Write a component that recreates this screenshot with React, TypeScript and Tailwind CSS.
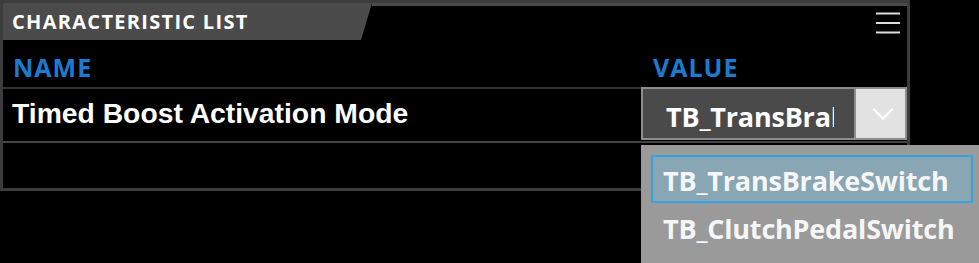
const UI_FONT = { fontFamily: '"Open Sans", "DejaVu Sans", sans-serif' }
const ROW_FONT = { fontFamily: '"Liberation Sans", Arial, sans-serif' }

const OPTIONS = ["TB_TransBrakeSwitch", "TB_ClutchPedalSwitch"]

function MenuIcon() {
  return (
    <svg width="24" height="22" viewBox="0 0 24 22" className="block">
      <rect x="0" y="0.5" width="24" height="2" fill="#dcdcdc" />
      <rect x="0" y="10" width="24" height="2" fill="#dcdcdc" />
      <rect x="0" y="19.5" width="24" height="2" fill="#dcdcdc" />
    </svg>
  )
}

function ValueSelect({ value }: { value: string }) {
  return (
    <div className="-mt-[2px] flex h-[53px] border-2 border-[#8e8e8e] bg-[#4a4a4a]">
      <div className="flex w-[191px] items-center overflow-hidden whitespace-nowrap pl-[23px] pt-[5px]">
        <span className="text-[27px] font-bold leading-none tracking-[-0.2px] text-white" style={UI_FONT}>
          {value}
        </span>
      </div>
      <div className="flex-1" />
      <div className="flex w-[51px] items-center justify-center border-l-2 border-[#8e8e8e] bg-[#e2e2e2] pl-[4px]">
        <svg width="22" height="14" viewBox="0 0 22 14">
          <polyline points="1.5,2 11,11.5 20.5,2" fill="none" stroke="#ffffff" strokeWidth="2.4" />
        </svg>
      </div>
    </div>
  )
}

function OptionList({ options, selected }: { options: string[]; selected: number }) {
  return (
    <div className="absolute left-[641px] top-[145px] flex h-[140px] w-[360px] flex-col bg-[#9a9a9a] pl-[10px] pt-[10px]">
      {options.map((opt, i) => (
        <div
          key={opt}
          className={`flex h-[48px] w-[322px] items-center border-2 pl-[10px] pt-[3px] ${
            i === selected ? "border-[#37a2e2] bg-[#88a6b4]" : "border-transparent"
          }`}
        >
          <span
            className="whitespace-nowrap text-[27px] font-bold leading-none tracking-[-0.2px] text-[#f6f6f6]"
            style={UI_FONT}
          >
            {opt}
          </span>
        </div>
      ))}
    </div>
  )
}

export default function App() {
  return (
    <div className="relative h-[263px] w-[979px] overflow-hidden bg-black">
      <section className="flex h-[191px] w-[910px] flex-col border-[3px] border-[#3c3c3c]">
        <header className="flex h-[37px] shrink-0">
          <div className="flex w-[369px] items-center bg-[#4b4b4b] pl-[9px] pt-[1px] [clip-path:polygon(0_0,100%_0,calc(100%-11px)_100%,0_100%)]">
            <span className="text-[20px] font-bold leading-none tracking-[1.3px] text-white" style={UI_FONT}>
              CHARACTERISTIC LIST
            </span>
          </div>
          <div className="flex flex-1 justify-end border-t-[3px] border-[#4b4b4b] pr-[7px] pt-[6px]">
            <MenuIcon />
          </div>
        </header>

        <div className="flex h-[47px] shrink-0 items-end pb-[4px]">
          <div className="flex-1 pl-[10px]">
            <span className="text-[25px] font-bold leading-none tracking-[1px] text-[#1b7bd0]" style={UI_FONT}>
              NAME
            </span>
          </div>
          <div className="w-[266px] pl-[12px]">
            <span className="text-[25px] font-bold leading-none tracking-[1px] text-[#1b7bd0]" style={UI_FONT}>
              VALUE
            </span>
          </div>
        </div>
        <div className="h-[2px] shrink-0 bg-[#333333]" />

        <div className="flex h-[52px] shrink-0">
          <div className="flex-1 pl-[9px] pt-[10px]">
            <span className="text-[28.3px] font-bold leading-none text-white" style={ROW_FONT}>
              Timed Boost Activation Mode
            </span>
          </div>
          <div className="w-[266px]">
            <ValueSelect value="TB_TransBrakeSwitch" />
          </div>
        </div>
        <div className="h-[2px] shrink-0 bg-[#444444]" />
        <div className="flex-1" />
      </section>

      <OptionList options={OPTIONS} selected={0} />
    </div>
  )
}
